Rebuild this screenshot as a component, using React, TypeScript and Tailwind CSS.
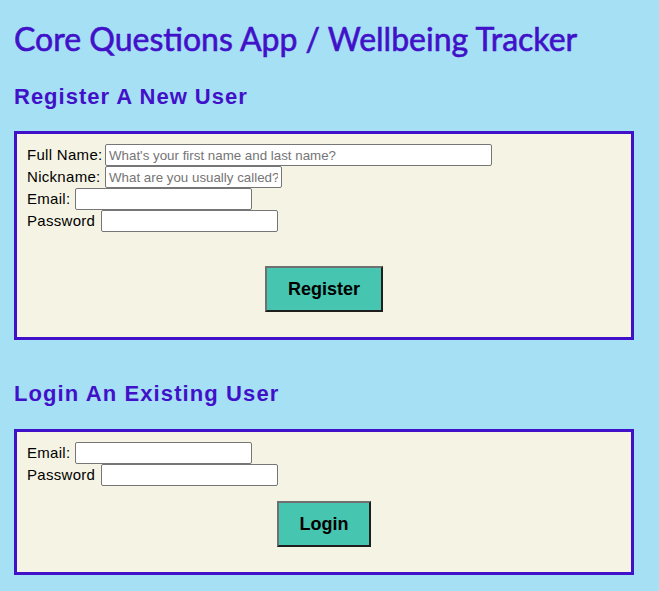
import React from "react";

const boxClass =
  "w-[620px] border-[3px] border-[#4111c9] bg-[#f5f4e4] px-[10px] pt-[10px]";

const inputClass =
  "h-[22px] border border-[#767676] rounded-[2px] bg-white px-[3px] text-[13.33px] tracking-normal text-black placeholder:text-[#757575] outline-none";

function Field({
  label,
  labelWidth,
  width = 177,
  placeholder,
  type = "text",
}: {
  label: string;
  labelWidth: number;
  width?: number;
  placeholder?: string;
  type?: string;
}) {
  return (
    <div className="flex h-[22px] items-center gap-[4px] text-[15px] text-black">
      <span
        className="shrink-0 whitespace-nowrap tracking-[0.3px]"
        style={{ width: labelWidth }}
      >
        {label}
      </span>
      <input
        type={type}
        placeholder={placeholder}
        className={inputClass}
        style={{ width }}
      />
    </div>
  );
}

function SubmitButton({ children }: { children: React.ReactNode }) {
  return (
    <div className="flex justify-center">
      <button
        type="button"
        className="h-[46px] px-[21px] bg-[#46c6b0] border-2 border-t-[#707070] border-l-[#707070] border-r-[#1e1e1e] border-b-[#1e1e1e] text-[18px] font-bold text-black"
      >
        {children}
      </button>
    </div>
  );
}

export default function App() {
  return (
    <div
      className="min-h-[591px] bg-[#a6e0f5] pl-[14px] pt-[20px] pb-[16px]"
      style={{ fontFamily: '"Liberation Sans", Arial, sans-serif' }}
    >
      <h1
        className="text-[32px] leading-[38px] text-[#4111c9] [-webkit-text-stroke:0.6px_#4111c9]"
        style={{ fontFamily: "Lato, sans-serif" }}
      >
        Core Questions App / Wellbeing Tracker
      </h1>

      <h2 className="mt-[26px] text-[22px] leading-[25px] font-bold tracking-[1px] text-[#4111c9]">
        Register A New User
      </h2>
      <div className={`${boxClass} mt-[22px] pb-[25px]`}>
        <Field
          label="Full Name:"
          labelWidth={74}
          width={387}
          placeholder="What's your first name and last name?"
        />
        <Field
          label="Nickname:"
          labelWidth={74}
          placeholder="What are you usually called?"
        />
        <Field label="Email:" labelWidth={44} type="email" />
        <Field label="Password" labelWidth={70} type="password" />
        <div className="mt-[34px]">
          <SubmitButton>Register</SubmitButton>
        </div>
      </div>

      <h2 className="mt-[41px] text-[22px] leading-[25px] font-bold tracking-[1.1px] text-[#4111c9]">
        Login An Existing User
      </h2>
      <div className={`${boxClass} mt-[23px] pb-[25px]`}>
        <Field label="Email:" labelWidth={44} type="email" />
        <Field label="Password" labelWidth={70} type="password" />
        <div className="mt-[15px]">
          <SubmitButton>Login</SubmitButton>
        </div>
      </div>
    </div>
  );
}
